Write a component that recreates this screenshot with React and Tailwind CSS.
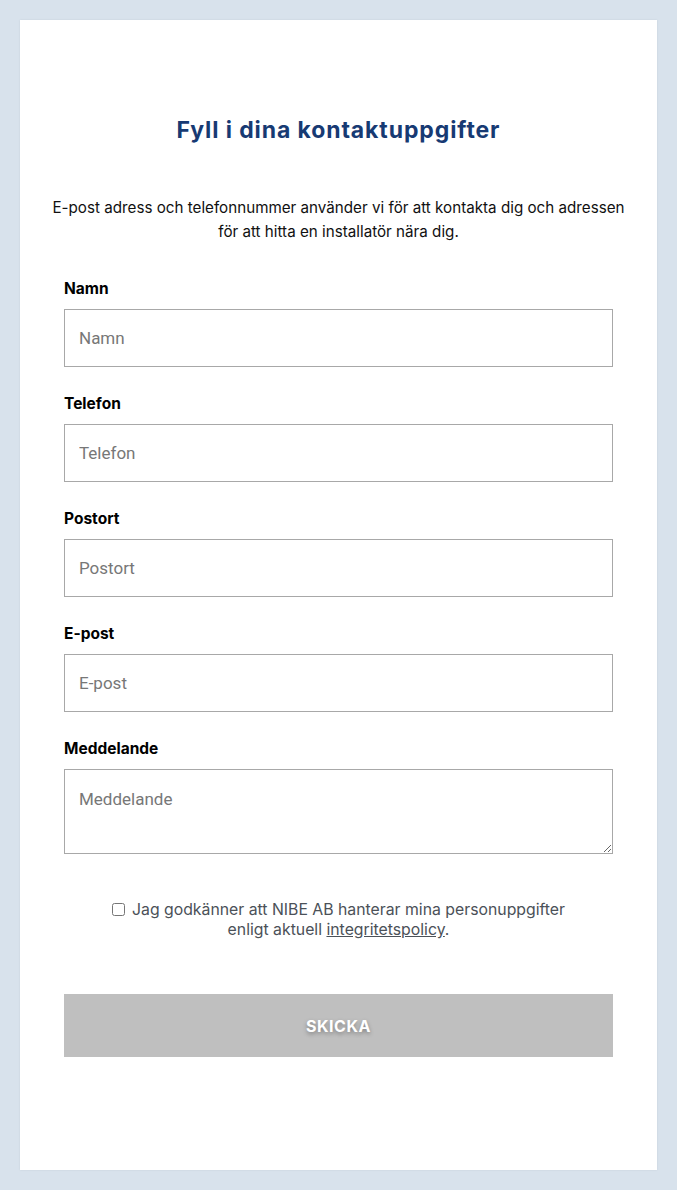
import React from "react";

const fields = [
  { label: "Namn", type: "text" },
  { label: "Telefon", type: "tel" },
  { label: "Postort", type: "text" },
  { label: "E-post", type: "email" },
];

export default function App() {
  return (
    <div className="min-h-[1190px] bg-[#d8e2ec] p-[20px]" style={{ fontFamily: "Inter, 'Noto Sans', sans-serif" }}>
      <div className="h-[1150px] bg-white px-[44px] pt-[95px] shadow-[0_0_2px_rgba(0,0,0,0.08)]">
        <h1 className="text-center text-[23px] font-bold leading-[30px] tracking-[0.9px] text-[#173a73]">
          Fyll i dina kontaktuppgifter
        </h1>
        <p className="mx-[-18px] mt-[51px] text-center text-[15.2px] leading-[24px] text-[#111]">
          E-post adress och telefonnummer använder vi för att kontakta dig och adressen för att hitta en installatör nära dig.
        </p>
        <form className="mt-[35px] flex flex-col">
          {fields.map((f) => (
            <div key={f.label} className="mb-[27px] flex flex-col">
              <label className="text-[15.5px] font-bold leading-[20px] text-black">{f.label}</label>
              <input
                type={f.type}
                placeholder={f.label}
                className="mt-[10px] h-[58px] w-full border border-[#a8a8a8] bg-white px-[14px] text-[17px] text-[#333] placeholder:text-[#777] outline-none"
                style={{ fontFamily: "Roboto, sans-serif" }}
              />
            </div>
          ))}
          <div className="flex flex-col">
            <label className="text-[15.5px] font-bold leading-[20px] text-black">Meddelande</label>
            <textarea
              placeholder="Meddelande"
              className="mt-[10px] h-[85px] w-full resize-y border border-[#a8a8a8] bg-white px-[14px] pt-[19px] text-[17px] leading-[20px] text-[#333] placeholder:text-[#777] outline-none"
              style={{ fontFamily: "Roboto, sans-serif" }}
            />
          </div>
          <div className="mt-[46px] text-center text-[15.8px] leading-[20px] text-[#4b5158]">
            <input type="checkbox" className="mr-[7px] inline-block h-[13px] w-[13px] align-[-1px]" />
            Jag godkänner att NIBE AB hanterar mina personuppgifter
            <br />
            enligt aktuell <a href="#" className="underline">integritetspolicy</a>.
          </div>
          <button
            type="button"
            className="mt-[54px] h-[63px] w-full bg-[#bfbfbf] text-[16px] font-bold tracking-[0.5px] text-white [text-shadow:0_2px_4px_rgba(0,0,0,0.35)]"
          >
            SKICKA
          </button>
        </form>
      </div>
    </div>
  );
}
